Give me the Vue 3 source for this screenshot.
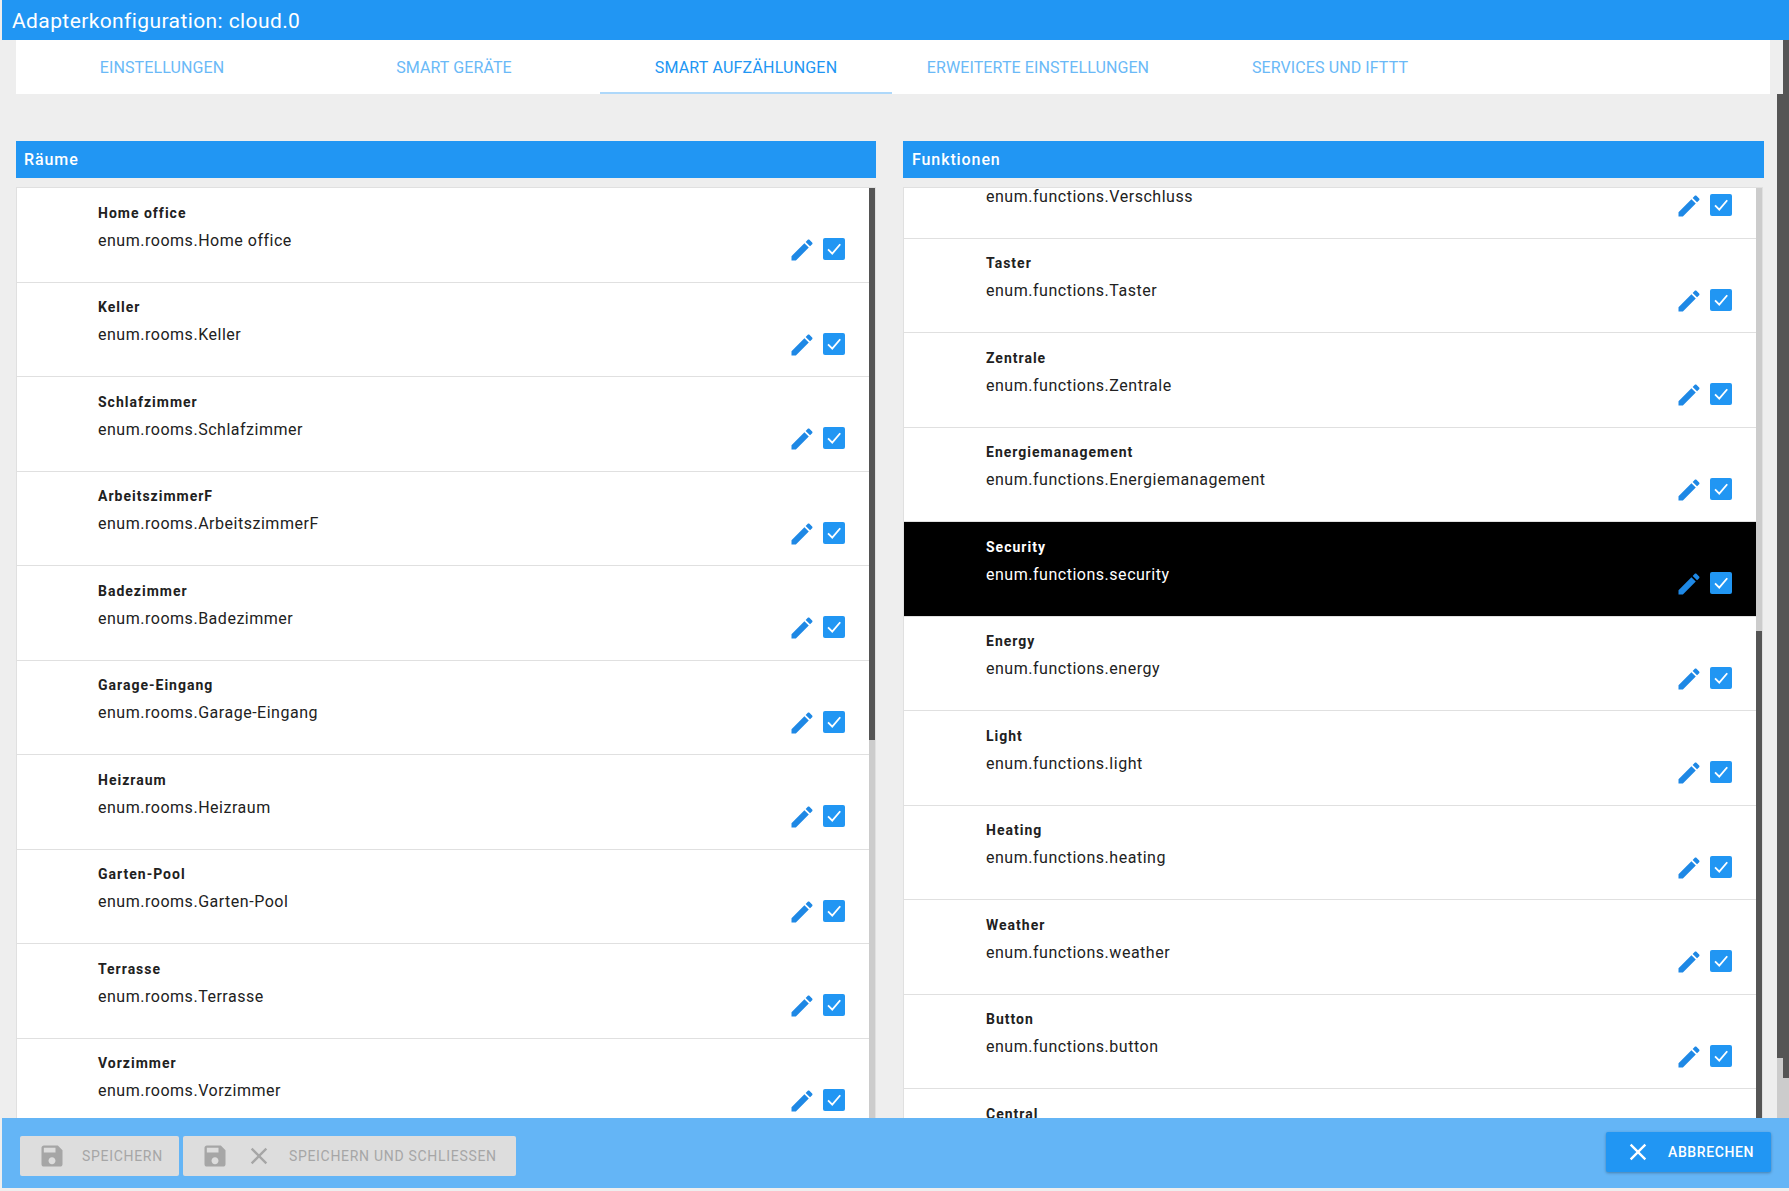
<script setup>
const rooms = ['Home office', 'Keller', 'Schlafzimmer', 'ArbeitszimmerF', 'Badezimmer', 'Garage-Eingang', 'Heizraum', 'Garten-Pool', 'Terrasse', 'Vorzimmer'].map((n) => ({ name: n, id: 'enum.rooms.' + n }))
const fns = [
  ['Verschluss', 'Verschluss'], ['Taster', 'Taster'], ['Zentrale', 'Zentrale'], ['Energiemanagement', 'Energiemanagement'],
  ['Security', 'security'], ['Energy', 'energy'], ['Light', 'light'], ['Heating', 'heating'], ['Weather', 'weather'], ['Button', 'button'], ['Central', 'central']
].map(([n, k]) => ({ name: n, id: 'enum.functions.' + k, selected: k === 'security' }))
const tabs = ['Einstellungen', 'Smart Geräte', 'Smart Aufzählungen', 'Erweiterte Einstellungen', 'Services und IFTTT']
const panels = [
  { title: 'Räume', items: rooms, key: 'left' },
  { title: 'Funktionen', items: fns, key: 'right' }
]
const SAVE = 'M17 3H5c-1.11 0-2 .9-2 2v14c0 1.1.89 2 2 2h14c1.1 0 2-.9 2-2V7l-4-4zm-5 16c-1.66 0-3-1.34-3-3s1.34-3 3-3 3 1.34 3 3-1.34 3-3 3zm3-10H5V5h10v4z'
const CLOSE = 'M19 6.41L17.59 5 12 10.59 6.41 5 5 6.41 10.59 12 5 17.59 6.41 19 12 13.41 17.59 19 19 17.59 13.41 12z'
const EDIT = 'M3 17.25V21h3.75L17.81 9.94l-3.75-3.75L3 17.25zM20.71 7.04c.39-.39.39-1.02 0-1.41l-2.34-2.34c-.39-.39-1.02-.39-1.41 0l-1.83 1.83 3.75 3.75 1.83-1.83z'
</script>

<template>
  <div class="page">
    <header class="title">Adapterkonfiguration: cloud.0</header>
    <nav class="tabs">
      <div v-for="(t, i) in tabs" :key="t" class="tab" :class="{ active: i === 2 }">{{ t }}</div>
    </nav>
    <main class="panels">
      <section v-for="p in panels" :key="p.key" class="panel" :class="p.key">
        <h2 class="panel-head">{{ p.title }}</h2>
        <div class="list">
          <div class="rows">
            <div v-for="it in p.items" :key="it.id" class="row" :class="{ selected: it.selected }">
              <div class="text">
                <div class="name">{{ it.name }}</div>
                <div class="id">{{ it.id }}</div>
              </div>
              <div class="actions">
                <svg class="edit" viewBox="0 0 24 24"><path :d="EDIT" /></svg>
                <span class="check">
                  <svg viewBox="0 0 24 24"><path d="M5.5 12.5l4.6 4.6L18.8 6.8" /></svg>
                </span>
              </div>
            </div>
          </div>
          <div class="track"><div class="thumb"></div></div>
        </div>
      </section>
    </main>

    <div class="outer-bar inner"><div class="outer-thumb"></div></div>
    <div class="outer-bar"><div class="outer-thumb"></div></div>

    <footer class="footer">
      <button class="btn disabled first">
        <svg viewBox="0 0 24 24"><path :d="SAVE" /></svg>
        <span>Speichern</span>
      </button>
      <button class="btn disabled">
        <svg viewBox="0 0 24 24"><path :d="SAVE" /></svg>
        <svg viewBox="0 0 24 24"><path :d="CLOSE" /></svg>
        <span>Speichern und schliessen</span>
      </button>
      <button class="btn cancel">
        <svg viewBox="0 0 24 24"><path :d="CLOSE" /></svg>
        <span>Abbrechen</span>
      </button>
    </footer>
  </div>
</template>

<style>
html, body { margin: 0; background: #eeeeee; }
</style>

<style scoped>
.page {
  position: relative;
  width: 1789px;
  height: 1191px;
  overflow: hidden;
  background: #eeeeee;
  font-family: Roboto, "Noto Sans", sans-serif;
  color: #212121;
}
.title {
  margin-left: 2px;
  height: 40px;
  line-height: 42px;
  padding-left: 10px;
  background: #2196f3;
  color: #fff;
  font-size: 21px;
  letter-spacing: 0.4px;
}
.tabs {
  display: flex;
  margin-left: 16px;
  width: 1754px;
  height: 54px;
  background: #fff;
}
.tab {
  box-sizing: border-box;
  width: 292px;
  height: 54px;
  line-height: 56px;
  text-align: center;
  font-size: 16px;
  letter-spacing: 0.1px;
  text-transform: uppercase;
  color: #6ab9f7;
}
.tab.active {
  color: #2196f3;
  letter-spacing: 0.2px;
  border-bottom: 2px solid #aed8fa;
}
.panels {
  display: flex;
  margin: 47px 0 0 16px;
}
.panel { width: 861px; }
.panel.left { width: 860px; margin-right: 27px; }
.panel-head {
  margin: 0 0 9px;
  height: 37px;
  line-height: 37px;
  padding-left: 8px;
  background: #2196f3;
  color: #fff;
  font-size: 16px;
  font-weight: 500;
  letter-spacing: 0.9px;
}
.right .panel-head { padding-left: 9px; }
.list {
  position: relative;
  box-sizing: border-box;
  height: 931px;
  overflow: hidden;
  background: #fff;
  border: 1px solid #e0e0e0;
  border-bottom: 0;
}
.right .list { margin-right: 1px; }
.rows { padding-right: 6px; }
.right .rows { margin-top: -44px; }
.row {
  box-sizing: border-box;
  display: flex;
  height: 94.5px;
  padding-left: 81px;
  border-bottom: 1px solid #e0e0e0;
}
.right .row { padding-left: 82px; }
.name {
  margin-top: 14.7px;
  line-height: 20px;
  font-size: 14px;
  font-weight: 700;
  letter-spacing: 1px;
}
.id {
  margin-top: 8px;
  line-height: 20px;
  font-size: 16px;
  letter-spacing: 0.52px;
}
.actions {
  margin-left: auto;
  display: flex;
  align-items: flex-start;
  gap: 7px;
  padding: 50px 24px 0 0;
}
.edit {
  width: 28px;
  height: 28px;
  margin-top: -2px;
  fill: #1e88e5;
}
.check {
  width: 22px;
  height: 22px;
  border-radius: 2px;
  background: #2196f3;
}
.check svg {
  display: block;
  width: 22px;
  height: 22px;
  fill: none;
  stroke: #fff;
  stroke-width: 2;
}
.selected {
  background: #000;
  color: #fff;
}
.track {
  position: absolute;
  top: 0;
  right: 0;
  bottom: 0;
  width: 6px;
  background: #cccccc;
}
.thumb {
  position: absolute;
  left: 0;
  width: 6px;
  background: #555555;
}
.left .thumb { top: 0; height: 552px; }
.right .thumb { top: 443px; bottom: 0; }
.outer-bar {
  position: absolute;
  top: 40px;
  right: 0;
  bottom: 73px;
  width: 6px;
  background: #cccccc;
}
.outer-bar.inner {
  top: 94px;
  right: 6px;
}
.outer-thumb {
  width: 6px;
  height: 1038px;
  background: #555555;
}
.inner .outer-thumb { height: 964px; }
.footer {
  position: absolute;
  left: 2px;
  right: 0;
  top: 1118px;
  height: 70px;
  display: flex;
  align-items: flex-start;
  gap: 4px;
  padding-left: 18px;
  background: #64b5f6;
}
.btn {
  display: flex;
  align-items: center;
  gap: 16px;
  height: 40px;
  margin-top: 18px;
  padding: 0 19px 0 18px;
  border: 0;
  border-radius: 2px;
  font-family: inherit;
  font-size: 14px;
  letter-spacing: 0.7px;
  text-transform: uppercase;
}
.btn.first { padding-right: 16px; }
.btn svg {
  width: 28px;
  height: 28px;
  flex: none;
  fill: currentColor;
}
.disabled {
  background: #dddddd;
  color: #a6a6a6;
}
.cancel {
  margin: 14px 18px 0 auto;
  padding-right: 17px;
  background: #2196f3;
  color: #fff;
  font-weight: 500;
  letter-spacing: 0.6px;
  box-shadow: 0 1px 3px rgba(0, 0, 0, 0.3);
}
</style>
